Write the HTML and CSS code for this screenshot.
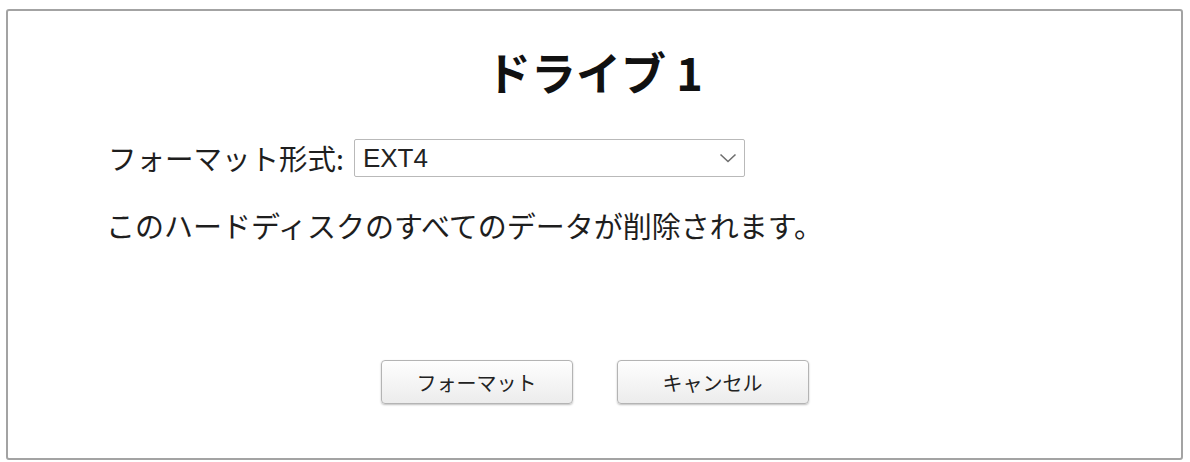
FILE: index.html
```html
<!DOCTYPE html>
<html lang="ja">
<head>
<meta charset="utf-8">
<title>ドライブ 1</title>
<link rel="stylesheet" href="styles.css">
</head>
<body>
<div class="dialog">
  <h1 class="title">ドライブ 1</h1>
  <div class="form-row">
    <label class="label" for="fmt">フォーマット形式:</label>
    <div class="select">
      <span class="select-value">EXT4</span>
      <svg class="chevron" width="18" height="10" viewBox="0 0 18 10"><path d="M1.5 1.5 L9 8.5 L16.5 1.5" fill="none" stroke="#6e6e6e" stroke-width="1.6"/></svg>
    </div>
  </div>
  <p class="message">このハードディスクのすべてのデータが削除されます。</p>
  <div class="actions">
    <button class="btn">フォーマット</button>
    <button class="btn">キャンセル</button>
  </div>
</div>
</body>
</html>
```
FILE: styles.css
```css
html, body {
  margin: 0;
  padding: 0;
  background: #ffffff;
}
body {
  font-family: "Noto Sans CJK JP", "Noto Sans", sans-serif;
  color: #1e1e1e;
}
.dialog {
  box-sizing: border-box;
  margin: 9px 0 0 6px;
  width: 1177px;
  height: 451px;
  border: 2px solid #a3a3a3;
  border-radius: 3px;
  background: #fff;
  display: flex;
  flex-direction: column;
  padding: 31px 0 0 100px;
}
.title {
  margin: 0 0 0 -100px;
  text-align: center;
  font-size: 45px;
  font-weight: 700;
  line-height: 60px;
  color: #111;
}
.form-row {
  display: flex;
  align-items: center;
  margin-top: 37px;
  height: 38px;
}
.label {
  font-size: 28.5px;
  line-height: 38px;
  margin-right: 10px;
}
.select {
  box-sizing: border-box;
  width: 391px;
  height: 38px;
  border: 1px solid #b9b9b9;
  border-radius: 2px;
  display: flex;
  align-items: center;
  justify-content: space-between;
  padding: 0 7px 0 8px;
}
.select-value {
  font-family: "Liberation Sans", Arial, sans-serif;
  font-size: 26px;
  color: #222;
}
.message {
  margin: 28px 0 0 -2px;
  font-size: 29px;
  line-height: 40px;
}
.actions {
  display: flex;
  justify-content: center;
  gap: 44px;
  margin: 115px 0 0 -100px;
}
.btn {
  box-sizing: border-box;
  width: 192px;
  height: 44px;
  border: 1px solid #b4b4b4;
  border-radius: 4px;
  background: linear-gradient(#fefefe, #ececec);
  box-shadow: 0 1px 2px rgba(0,0,0,0.25);
  font-family: "Noto Sans CJK JP", sans-serif;
  font-size: 20px;
  color: #222;
  padding: 0;
}
```
